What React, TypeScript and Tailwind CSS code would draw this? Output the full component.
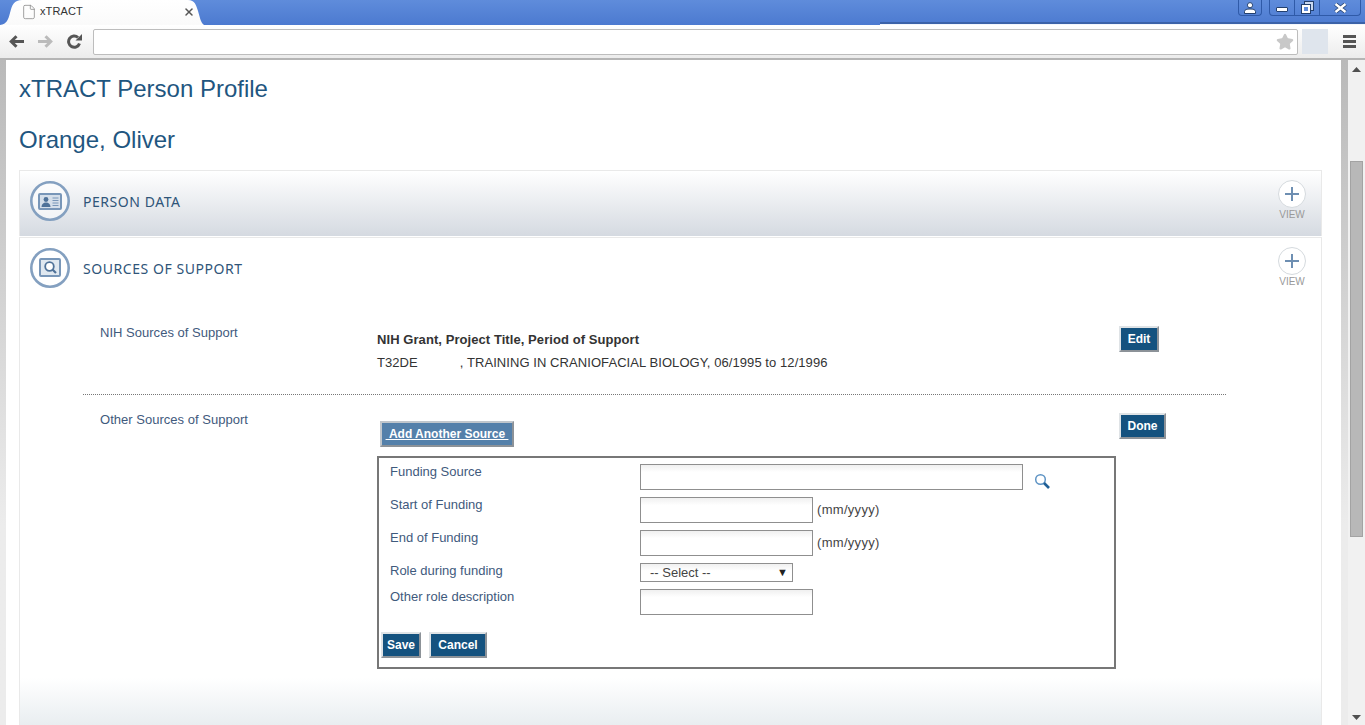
import { File, Star, X } from "lucide-react";

function Btn({ label, className = "" }: { label: string; className?: string }) {
  return (
    <button
      className={`h-[26px] bg-[#14527f] text-white text-[12px] font-bold leading-none border-2 border-t-[#dfe3e6] border-l-[#dfe3e6] border-r-[#8c9298] border-b-[#8c9298] ${className}`}
    >
      {label}
    </button>
  );
}

function PlusView() {
  return (
    <div className="flex flex-col items-center w-[30px]">
      <div className="size-[28px] rounded-full border border-[#d5dade] bg-white flex items-center justify-center">
        <svg width="14" height="14" viewBox="0 0 14 14">
          <path d="M7 0v14M0 7h14" stroke="#6e8fb2" strokeWidth="2" />
        </svg>
      </div>
      <span className="mt-[1px] text-[10px] leading-[12px] text-[#999]">VIEW</span>
    </div>
  );
}

function PersonIcon() {
  return (
    <svg width="40" height="40" viewBox="0 0 40 40">
      <circle cx="20" cy="20" r="18.700" fill="#fff" fillOpacity="0.6" stroke="#84a0c0" strokeWidth="2.600" />
      <rect x="9" y="13" width="22" height="15" rx="1" fill="#d5dfea" stroke="#7896b8" strokeWidth="2" />
      <circle cx="16" cy="18.500" r="2.400" fill="#4f7299" />
      <path d="M11.500 26c0-3 2-4.500 4.500-4.500s4.500 1.500 4.500 4.500z" fill="#4f7299" />
      <path d="M22.500 17h6M22.500 19.500h6M22.500 22h6M22.500 24.500h6" stroke="#7896b8" />
    </svg>
  );
}

function SupportIcon() {
  return (
    <svg width="40" height="40" viewBox="0 0 40 40">
      <circle cx="20" cy="20" r="18.700" fill="#fff" stroke="#84a0c0" strokeWidth="2.600" />
      <rect x="10" y="11" width="20" height="17" rx="1" fill="#e0e8f0" stroke="#7896b8" strokeWidth="2" />
      <circle cx="19.500" cy="18.500" r="4.300" fill="#fff" stroke="#4f7299" strokeWidth="1.800" />
      <path d="M22.500 21.500l3.500 3.500" stroke="#4f7299" strokeWidth="2.200" />
    </svg>
  );
}

function Section({ title, icon, className = "" }: { title: string; icon: React.ReactNode; className?: string }) {
  return (
    <div className={`flex items-start h-[65px] pl-[10px] pr-[14px] pt-[10px] ${className}`}>
      {icon}
      <h3 className="ml-[13px] mt-[12px] font-['Noto_Sans'] text-[14px] leading-[18px] tracking-[0.55px] text-[#2f5579]">{title}</h3>
      <div className="ml-auto -mt-[1px]">
        <PlusView />
      </div>
    </div>
  );
}

function Field({ className = "" }: { className?: string }) {
  return <div className={`h-[26px] border border-[#8f8f8f] bg-gradient-to-b from-[#f0f0f0] to-white to-30% ${className}`} />;
}

function Row({ label, children, className = "" }: { label: string; children: React.ReactNode; className?: string }) {
  return (
    <div className={`flex items-start ${className}`}>
      <span className="w-[261px] pl-[11px] text-[13px] leading-[15px] text-[#3f5a7d]">{label}</span>
      {children}
    </div>
  );
}

export default function App() {
  return (
    <div className="w-[1365px] h-[725px] overflow-hidden flex flex-col bg-white font-['Liberation_Sans',Arial,sans-serif]">
      {/* title strip */}
      <div className="relative h-[25px] shrink-0 bg-gradient-to-b from-[#5f8cdb] to-[#4c7ad0] flex items-start">
        <div className="absolute left-[880px] right-0 bottom-0 h-[3px] bg-[#f3f6fb] border-t-2 border-t-[#3b62a8]" />
        <div className="relative w-[204px] h-[25px] shrink-0">
          <svg className="absolute inset-0" width="204" height="25" viewBox="0 0 204 25">
            <defs>
              <linearGradient id="tab" x1="0" y1="0" x2="0" y2="1">
                <stop offset="0" stopColor="#ffffff" />
                <stop offset="1" stopColor="#fafafa" />
              </linearGradient>
            </defs>
            <path d="M0 25 C7 24 8 20 10 13 C12 5 14 0 22 0 H188 C195 0 196 5 198 11 C200 18 201 23 204 25 Z" fill="url(#tab)" />
          </svg>
          <File className="absolute left-[21px] top-[4px] size-[16px] text-[#8a8a8a]" strokeWidth={1.2} />
          <span className="absolute left-[40px] top-[4px] text-[11px] leading-[15px] tracking-[0.1px] text-[#333]">xTRACT</span>
          <X className="absolute left-[183px] top-[6px] size-[12px] text-[#555]" strokeWidth={3} />
        </div>
        <div className="relative ml-auto mr-[4px] flex items-start">
          <div className="w-[24px] h-[16px] border border-t-0 border-[#2f5aa8] rounded-b-[4px] flex items-center justify-center">
            <svg width="14" height="12" viewBox="0 0 14 12">
              <circle cx="7" cy="3.200" r="2.600" fill="#fff" stroke="#23406f" />
              <path d="M1.500 11.500V9.500C1.500 7.500 4 7 7 7s5.500.5 5.500 2.500V11.500Z" fill="#fff" stroke="#23406f" />
            </svg>
          </div>
          <div className="ml-[7px] w-[92px] h-[16px] border border-t-0 border-[#2f5aa8] rounded-b-[4px] flex">
            <div className="w-[25px] flex items-center justify-center border-r border-[#2f5aa8]">
              <div className="w-[12px] h-[5px] mt-[3px] bg-white border border-[#23406f] rounded-[1px]" />
            </div>
            <div className="w-[25px] flex items-center justify-center border-r border-[#2f5aa8]">
              <svg width="13" height="13" viewBox="0 0 13 13">
                <rect x="3.500" y="0.500" width="9" height="9" fill="#c9d8f0" stroke="#23406f" />
                <rect x="0.500" y="3.500" width="9" height="9" fill="#fff" stroke="#23406f" />
                <rect x="3" y="6" width="4" height="4" fill="#5f8cdb" />
              </svg>
            </div>
            <div className="flex-1 flex items-center justify-center">
              <svg width="13" height="10" viewBox="0 0 13 10">
                <path d="M1.500 1l10 8M11.500 1l-10 8" stroke="#23406f" strokeWidth="4" />
                <path d="M1.500 1l10 8M11.500 1l-10 8" stroke="#fff" strokeWidth="2.400" />
              </svg>
            </div>
          </div>
        </div>
      </div>

      {/* toolbar */}
      <div className="h-[35px] shrink-0 bg-gradient-to-b from-white to-[#ececec] border-b-2 border-b-[#b5b5b5] flex items-center pl-[9px]">
        <svg width="15" height="13" viewBox="0 0 15 13">
          <path d="M15 6.500H3M7.500 1.200L2.200 6.500l5.300 5.300" fill="none" stroke="#555" strokeWidth="3" />
        </svg>
        <svg className="ml-[14px]" width="15" height="13" viewBox="0 0 15 13">
          <path d="M0 6.500h12M7.500 1.200l5.300 5.300-5.300 5.300" fill="none" stroke="#bbb" strokeWidth="3" />
        </svg>
        <svg className="ml-[14px]" width="15" height="15" viewBox="0 0 15 15">
          <path d="M12.500 9.500A5.600 5.600 0 1 1 11 3.500" fill="none" stroke="#555" strokeWidth="3" />
          <path d="M8.500 6.500H15V0Z" fill="#555" />
        </svg>
        <div className="ml-[11px] w-[1205px] h-[26px] bg-white border border-[#bdbdbd] rounded-[2px] flex items-center justify-end pr-[3px]">
          <Star className="size-[18px] text-[#c8c8c8]" fill="#c8c8c8" />
        </div>
        <div className="ml-[4px] w-[26px] h-[25px] bg-[#dfe5ed]" />
        <div className="ml-[15px] w-[13px] flex flex-col gap-[2px]">
          <div className="h-[3px] bg-[#555]" />
          <div className="h-[3px] bg-[#555]" />
          <div className="h-[3px] bg-[#555]" />
        </div>
      </div>

      {/* page */}
      <div className="flex flex-1 min-h-0">
        <div className="w-[6px] shrink-0 bg-gradient-to-b from-[#b9b9b9] to-[#ececec] to-70%" />
        <main className="flex-1 min-w-0 pl-[13px] pr-[19px]">
          <h1 className="mt-[14px] text-[24px] leading-[30px] text-[#1f5680]">xTRACT Person Profile</h1>
          <h2 className="mt-[21px] text-[24px] leading-[30px] text-[#1f5680]">Orange, Oliver</h2>

          <div className="mt-[15px] border border-b-0 border-[#e9e9e9]">
            <Section
              title="PERSON DATA"
              icon={<PersonIcon />}
              className="bg-gradient-to-b from-white to-[#d5dae1]"
            />
          </div>
          <div className="mt-px border-x border-t border-[#e9e9e9] h-[490px] bg-gradient-to-b from-white from-90% to-[#e8edf0]">
            <Section title="SOURCES OF SUPPORT" icon={<SupportIcon />} />

            <div className="ml-[63px] mr-[95px]">
              <div className="flex items-start h-[92px] pt-[21px] border-b border-dotted border-[#777]">
                <span className="mt-[1px] w-[294px] pl-[17px] text-[13px] leading-[16px] tracking-[0.02px] text-[#3f5a7d]">NIH Sources of Support</span>
                <div className="pt-[4px] text-[13px] leading-[23px] tracking-[0.07px] text-[#333]">
                  <p className="font-bold">NIH Grant, Project Title, Period of Support</p>
                  <p>T32DE<span className="inline-block w-[42px]" />, TRAINING IN CRANIOFACIAL BIOLOGY, 06/1995 to 12/1996</p>
                </div>
                <Btn label="Edit" className="mt-[2px] ml-auto mr-[67px] w-[40px]" />
              </div>

              <div className="flex items-start pt-[16px]">
                <span className="mt-[1px] w-[294px] pl-[17px] text-[13px] leading-[16px] tracking-[0.02px] text-[#3f5a7d]">Other Sources of Support</span>
                <div className="w-[739px]">
                  <button className="block ml-[3px] mt-[10px] h-[26px] w-[134px] whitespace-nowrap bg-[#5480aa] text-white text-[12px] font-bold leading-none underline border-2 border-[#c0c6cc] border-r-[#8c9298] border-b-[#8c9298]">
                    &nbsp;Add Another Source&nbsp;
                  </button>
                  <div className="mt-[9px] h-[213px] border-2 border-[#777] pt-[6px]">
                    <Row label="Funding Source" className="h-[33px]">
                      <Field className="w-[383px]" />
                      <svg className="ml-[11px] mt-[9px]" width="17" height="17" viewBox="0 0 17 17">
                        <circle cx="6.500" cy="6.500" r="4.800" fill="none" stroke="#5d93c4" strokeWidth="1.500" />
                        <path d="M10 10l5 5" stroke="#1f5f96" strokeWidth="2.600" />
                      </svg>
                    </Row>
                    <Row label="Start of Funding" className="h-[33px]">
                      <Field className="w-[173px]" />
                      <span className="ml-[4px] mt-[5px] text-[13px] leading-[16px] tracking-[0.3px] text-[#444]">(mm/yyyy)</span>
                    </Row>
                    <Row label="End of Funding" className="h-[33px]">
                      <Field className="w-[173px]" />
                      <span className="ml-[4px] mt-[5px] text-[13px] leading-[16px] tracking-[0.3px] text-[#444]">(mm/yyyy)</span>
                    </Row>
                    <Row label="Role during funding" className="h-[26px]">
                      <div className="w-[153px] h-[19px] border border-[#8f8f8f] bg-gradient-to-b from-[#f0f0f0] to-white to-40% flex items-center justify-between pl-[9px] pr-[4px] text-[13px] leading-none text-[#444]">
                        <span>-- Select --</span>
                        <span className="text-[11px] text-[#222]">▼</span>
                      </div>
                    </Row>
                    <Row label="Other role description" className="h-[43px]">
                      <Field className="w-[173px]" />
                    </Row>
                    <div className="flex gap-[8px] pl-[2px]">
                      <Btn label="Save" className="w-[40px]" />
                      <Btn label="Cancel" className="w-[58px]" />
                    </div>
                  </div>
                </div>
                <Btn label="Done" className="mt-[2px] ml-[3px] w-[47px]" />
              </div>
            </div>
          </div>
        </main>
        <div className="w-[7px] shrink-0 bg-gradient-to-b from-[#b9b9b9] to-[#ececec] to-70%" />

        {/* scrollbar */}
        <div className="relative w-[17px] shrink-0 bg-[#f1f1f1] flex flex-col items-center justify-between pt-[7px] pb-[5px]">
          <svg width="9" height="5" viewBox="0 0 9 5"><path d="M4.500 0L9 5H0z" fill="#505050" /></svg>
          <div className="absolute left-[2px] top-[101px] w-[13px] h-[376px] bg-[#b8b8b8] border border-[#a3a3a3]" />
          <svg width="9" height="5" viewBox="0 0 9 5"><path d="M0 0h9L4.500 5z" fill="#505050" /></svg>
        </div>
      </div>
    </div>
  );
}
